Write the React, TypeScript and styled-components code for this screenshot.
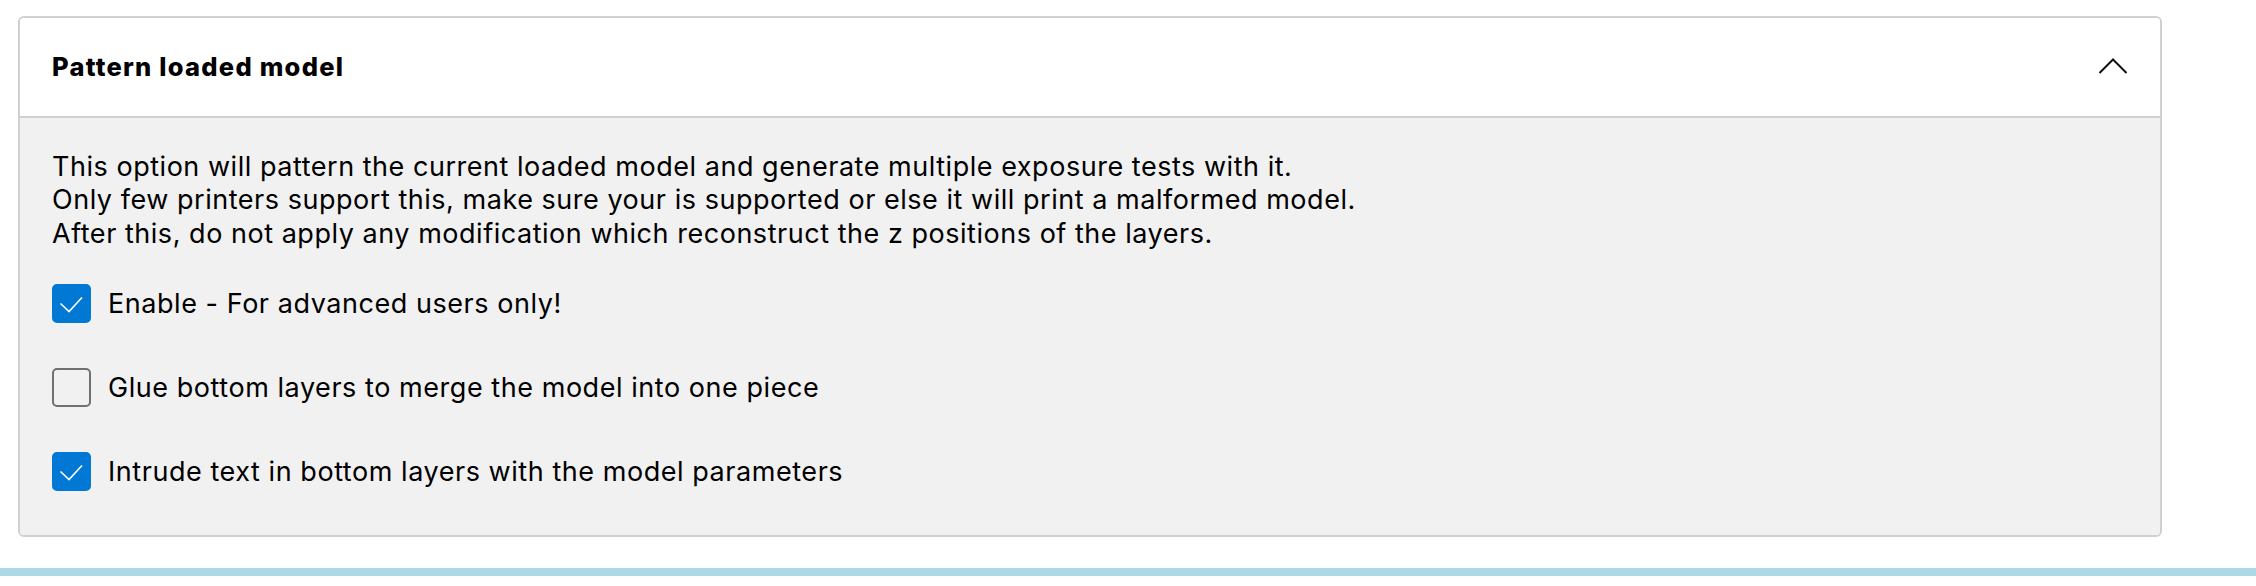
import styled, { createGlobalStyle } from "styled-components";

const GlobalStyle = createGlobalStyle`
  body {
    margin: 0;
    background: #ffffff;
    font-family: Inter, "Noto Sans", sans-serif;
    color: #000000;
  }
`;

const Page = styled.div`
  display: flex;
  flex-direction: column;
  padding-top: 16px;
`;

const Panel = styled.section`
  margin-left: 18px;
  width: 2144px;
  box-sizing: border-box;
  border: 2px solid #d0d0d0;
  border-radius: 6px;
  overflow: hidden;
`;

const Header = styled.div`
  display: flex;
  align-items: center;
  justify-content: space-between;
  height: 98px;
  padding: 0 32px;
  background: #ffffff;
  border-bottom: 2px solid #d0d0d0;
`;

const Title = styled.h2`
  margin: 0;
  font-size: 25.5px;
  font-weight: 800;
  letter-spacing: 1.25px;
  line-height: 30px;
  color: #000000;
`;

const ToggleButton = styled.button`
  display: flex;
  align-items: center;
  justify-content: center;
  padding: 0;
  border: none;
  background: transparent;
  cursor: pointer;
  margin-top: -4px;
`;

const Body = styled.div`
  display: flex;
  flex-direction: column;
  gap: 34px;
  padding: 32px 32px 44px;
  background: #f1f1f1;
`;

const Description = styled.p`
  margin: 0;
  font-size: 27px;
  letter-spacing: 0.53px;
  line-height: 33.4px;
`;

const Options = styled.div`
  display: flex;
  flex-direction: column;
  gap: 45px;
`;

const OptionRow = styled.label`
  display: flex;
  align-items: center;
  gap: 17px;
  font-size: 27px;
  letter-spacing: 0.55px;
  line-height: 33.4px;
  cursor: pointer;
`;

const Box = styled.span<{ $checked: boolean }>`
  display: flex;
  align-items: center;
  justify-content: center;
  width: 39px;
  height: 39px;
  flex-shrink: 0;
  box-sizing: border-box;
  border-radius: 5px;
  background: ${p => (p.$checked ? "#0078d4" : "transparent")};
  border: 2px solid ${p => (p.$checked ? "#0078d4" : "#707070")};
`;

const Stripe = styled.div`
  margin-top: 31px;
  height: 8px;
  background: #add8e6;
`;

function Checkbox({ checked, label }: { checked: boolean; label: string }) {
  return (
    <OptionRow>
      <Box $checked={checked}>
        {checked && (
          <svg width="39" height="39" viewBox="0 0 39 39" style={{ margin: -2 }}>
            <polyline
              points="8.5,19.5 17,27.5 30,13.5"
              fill="none"
              stroke="#ffffff"
              strokeWidth="1.6"
            />
          </svg>
        )}
      </Box>
      {label}
    </OptionRow>
  );
}

const options = [
  { label: "Enable - For advanced users only!", checked: true },
  { label: "Glue bottom layers to merge the model into one piece", checked: false },
  { label: "Intrude text in bottom layers with the model parameters", checked: true },
];

export default function App() {
  return (
    <>
      <GlobalStyle />
      <Page>
        <Panel>
          <Header>
            <Title>Pattern loaded model</Title>
            <ToggleButton aria-label="Collapse">
              <svg width="30" height="17" viewBox="0 0 30 17">
                <polyline
                  points="1.5,16 15,2.5 28.5,16"
                  fill="none"
                  stroke="#111111"
                  strokeWidth="2"
                />
              </svg>
            </ToggleButton>
          </Header>
          <Body>
            <Description>
              This option will pattern the current loaded model and generate multiple exposure tests with it.
              <br />
              Only few printers support this, make sure your is supported or else it will print a malformed model.
              <br />
              After this, do not apply any modification which reconstruct the z positions of the layers.
            </Description>
            <Options>
              {options.map(o => (
                <Checkbox key={o.label} checked={o.checked} label={o.label} />
              ))}
            </Options>
          </Body>
        </Panel>
        <Stripe />
      </Page>
    </>
  );
}
